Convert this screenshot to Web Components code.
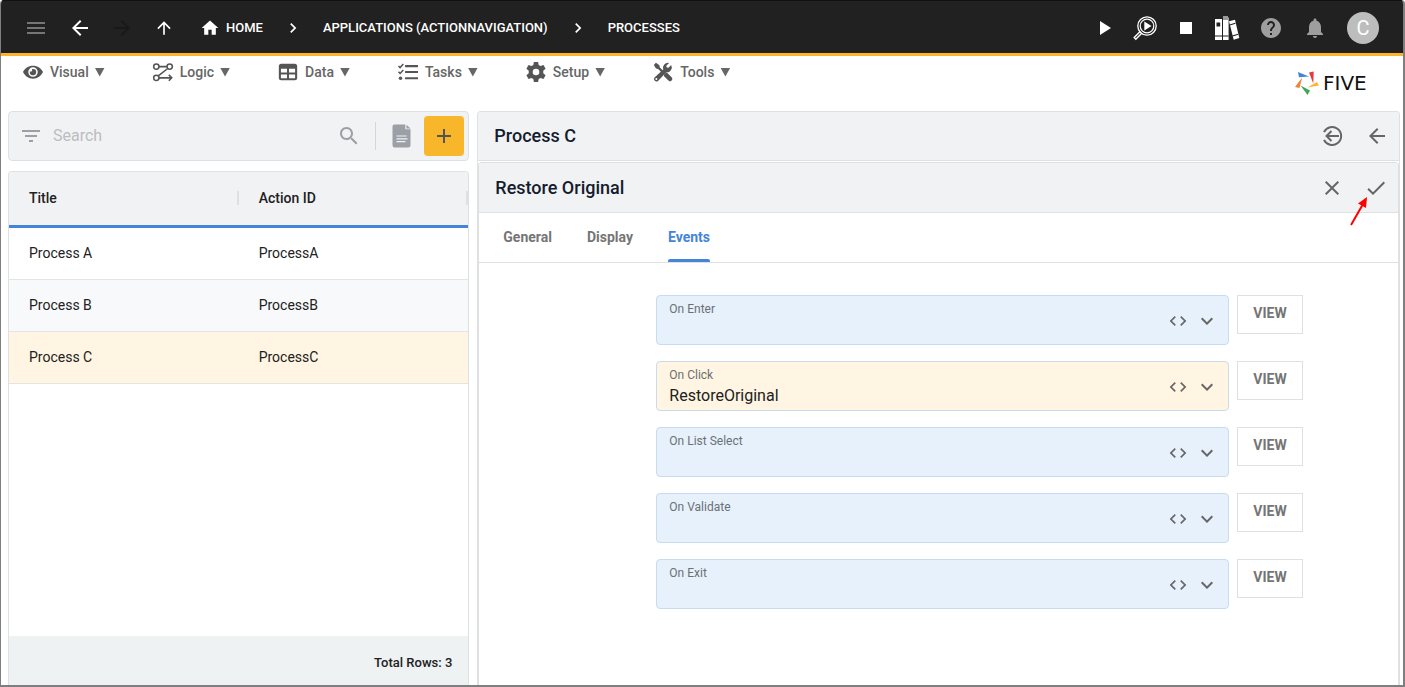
<!DOCTYPE html>
<html lang="en">
<head>
<meta charset="utf-8">
<meta name="viewport" content="width=device-width, initial-scale=1">
<title>Five - Processes</title>
<style>
  html, body { height: 100%; margin: 0; }
  body { font-family: Roboto, "Liberation Sans", sans-serif; font-size: 14px; color: #212121; background: #fff; }
</style>
</head>
<body>
<five-app></five-app>

<script>
const RESET = `
  *, *::before, *::after { box-sizing: border-box; }
  button { font: inherit; color: inherit; background: none; border: 0; padding: 0; margin: 0; cursor: pointer; display: flex; align-items: center; justify-content: center; }
  a { color: inherit; text-decoration: none; }
`;

function define(name, css, html, setup) {
  const template = document.createElement('template');
  template.innerHTML = `<style>${RESET}${css}</style>${typeof html === 'string' ? html : ''}`;
  customElements.define(name, class extends HTMLElement {
    connectedCallback() {
      if (this.shadowRoot) return;
      const root = this.attachShadow({ mode: 'open' });
      root.append(template.content.cloneNode(true));
      if (typeof html === 'function') root.innerHTML += html(this);
      if (setup) setup(this, root);
    }
  });
}

const ICONS = {
  menu: '<path d="M3 18h18v-2H3v2zm0-5h18v-2H3v2zm0-7v2h18V6H3z"/>',
  back: '<path d="M20 11H7.83l5.59-5.59L12 4l-8 8 8 8 1.41-1.41L7.83 13H20v-2z"/>',
  forward: '<path d="M12 4l-1.41 1.41L16.17 11H4v2h12.17l-5.58 5.59L12 20l8-8z"/>',
  up: '<path d="M4 12l1.41 1.41L11 7.83V20h2V7.83l5.58 5.59L20 12l-8-8-8 8z"/>',
  home: '<path d="M10 20v-6h4v6h5v-8h3L12 3 2 12h3v8z"/>',
  next: '<path d="M10 6L8.59 7.41 13.17 12l-4.58 4.59L10 18l6-6z"/>',
  play: '<path d="M8 5v14l11-7z"/>',
  stop: '<path d="M6 6h12v12H6z"/>',
  inspect: '<g fill="none" stroke="currentColor"><circle cx="14" cy="10" r="9.2" stroke-width="1.3"/><circle cx="14" cy="10" r="6.8" stroke-width="1.2"/><path d="M7.4 15.2L1.2 21.6l1.6 1.6L9 17" stroke-width="1.4"/></g><path d="M11.3 5.6v9l7.2-4.5z"/>',
  books: '<path d="M0 3h7v21H0zM8 1.500h5.600V24H8zM14 5.300l6-1.600L24.300 22l-5.600 1.800z"/><path fill="#999" d="M8 0h5v4H8z"/><g fill="#212121"><path d="M1.500 6.500h3.700v4H1.500zM0 19.500h7v1H0zM8 19.500h5.600v1H8zM7 3h.8v21H7z"/><path d="M14.500 8.500l5.800-1.700.3 1-5.800 1.700zM17.300 19.500l5.700-1.700.3 1-5.700 1.700z"/></g>',
  help: '<path d="M12 2C6.480 2 2 6.480 2 12s4.480 10 10 10 10-4.480 10-10S17.520 2 12 2zm1 17h-2v-2h2v2zm2.070-7.750l-.9.920C13.450 12.900 13 13.500 13 15h-2v-.5c0-1.100.450-2.100 1.170-2.830l1.240-1.260c.370-.360.590-.860.590-1.410 0-1.100-.9-2-2-2s-2 .9-2 2H8c0-2.210 1.790-4 4-4s4 1.790 4 4c0 .880-.360 1.680-.930 2.250z"/>',
  bell: '<path d="M12 22c1.100 0 2-.9 2-2h-4c0 1.100.890 2 2 2zm6-6v-5c0-3.070-1.640-5.640-4.500-6.320V4c0-.830-.670-1.500-1.500-1.500s-1.500.670-1.500 1.500v.680C7.630 5.360 6 7.920 6 11v5l-2 2v1h16v-1l-2-2z"/>',
  filter: '<path d="M10 18h4v-2h-4v2zM3 6v2h18V6H3zm3 7h12v-2H6v2z"/>',
  search: '<path d="M15.500 14h-.790l-.280-.270C15.410 12.590 16 11.110 16 9.500 16 5.910 13.090 3 9.500 3S3 5.910 3 9.500 5.910 16 9.500 16c1.610 0 3.090-.590 4.230-1.570l.270.280v.790l5 4.990L20.490 19l-4.990-5zm-6 0C7.010 14 5 11.990 5 9.500S7.010 5 9.500 5 14 7.010 14 9.500 11.990 14 9.500 14z"/>',
  add: '<path d="M19 13h-6v6h-2v-6H5v-2h6V5h2v6h6v2z"/>',
  note: '<path d="M4.500.5h10.800v4.800h5.200v16a2.200 2.200 0 0 1-2.200 2.200H4.700a2.200 2.200 0 0 1-2.200-2.200V2.500a2 2 0 0 1 2-2z"/><path d="M16.500.8l4 3.700h-4z"/><path stroke="#f1f2f4" stroke-width="1.200" d="M6.500 12h10M6.500 14.800h11M6.500 17.600h9"/>',
  close: '<path d="M19 6.410L17.590 5 12 10.590 6.410 5 5 6.410 10.590 12 5 17.590 6.410 19 12 13.410 17.590 19 19 17.590 13.410 12z"/>',
  check: '<path d="M9 16.170L4.830 12l-1.420 1.410L9 19 21 7l-1.410-1.410z"/>',
  down: '<path d="M16.590 8.590L12 13.170 7.410 8.590 6 10l6 6 6-6z"/>',
  code: '<path d="M9.400 16.600L4.800 12l4.600-4.600L8 6l-6 6 6 6 1.400-1.400zm5.200 0l4.600-4.600-4.600-4.600L16 6l6 6-6 6-1.400-1.400z"/>',
  exit: '<g fill="none" stroke="currentColor" stroke-width="2"><path d="M3 8.200a9 9 0 1 1 0 7.600"/><path d="M18 12H5.500M10.500 7l-5 5 5 5"/></g>',
  visual: '<path fill-rule="evenodd" d="M12 4.500C6.500 4.500 2 7.600 0 12c2 4.400 6.500 8 12 8s10-3.600 12-8c-2-4.400-6.500-7.500-12-7.500zm0 13.300a5.700 5.700 0 1 1 0-11.400 5.700 5.700 0 0 1 0 11.400z"/><path d="M12 8.300a3.800 3.800 0 1 1-3.700 3c1.700.8 3.300-.8 2.500-2.700.4-.2.800-.3 1.200-.3z"/>',
  logic: '<g fill="none" stroke="currentColor" stroke-width="1.900"><circle cx="4" cy="5.500" r="3.200"/><circle cx="20" cy="5.500" r="3.200"/><circle cx="4" cy="19" r="3.200"/><path d="M7.200 5.500h9.600M17.700 7.800L6.300 16.700M7.200 19H22.500M19 15.500l3.500 3.500-3.500 3.500"/></g>',
  data: '<path fill-rule="evenodd" d="M4 2h16a3 3 0 0 1 3 3v14a3 3 0 0 1-3 3H4a3 3 0 0 1-3-3V5a3 3 0 0 1 3-3zM3.500 8v4.500h7.300V8zM13.200 8v4.500h7.300V8zM3.500 15v4.500h7.300V15zM13.200 15v4.500h7.300V15z"/>',
  tasks: '<g fill="none" stroke="currentColor"><path stroke-width="2.600" d="M8.500 5H24M8.500 12H24M8.500 19.500H24"/><path stroke-width="1.800" d="M.6 4.800l1.900 1.900L6.400 2.500M.6 11.800l1.900 1.900 3.900-4.200"/></g><circle cx="3" cy="19.500" r="2.100"/>',
  setup: '<path fill-rule="evenodd" d="M9.500 0h5l.7 3.600 2.300 1.300 3.500-1.200 2.500 4.300-2.800 2.500v3l2.800 2.500-2.500 4.300-3.500-1.200-2.300 1.300-.7 3.600h-5l-.7-3.600-2.300-1.300L3 20.300.5 16l2.800-2.500v-3L.5 8 3 3.700l3.500 1.200 2.300-1.300zM12 8a4 4 0 1 0 0 8 4 4 0 0 0 0-8z"/>',
  tools: '<path d="M1 3.500L3.500 1l4.200 2.800.4 2.500 4.400 4.400-2 2L6.100 8.300l-2.500-.4zM13 15.300l2.300-2.400 1.800.3 5.300 5.200a2.700 2.700 0 0 1-3.900 3.900l-5.200-5.200z"/><path fill-rule="evenodd" d="M21.800 3.700l-3.300 3.300-2.100-.4-.4-2.100 3.300-3.300a6 6 0 0 0-7 7.800L1.800 18.500a3 3 0 0 0 4.200 4.200l9.700-10.200a6 6 0 0 0 6.100-8.800zM4 19.300a1.200 1.200 0 1 1 0 2.400 1.200 1.200 0 0 1 0-2.400z"/>'
};

define('five-icon',
  `:host { display: inline-flex; flex: none; } svg { display: block; fill: currentColor; overflow: visible; }`,
  el => {
    const size = el.getAttribute('size') || 24;
    return `<svg width="${size}" height="${size}" viewBox="0 0 24 24" aria-hidden="true">${ICONS[el.getAttribute('name')]}</svg>`;
  });

define('five-topbar', `
  :host { display: flex; justify-content: space-between; align-items: center; height: 56px; padding: 2px 24px 0 23px; background: #212121; color: #fff; border-top: 1px solid #111; border-bottom: 3px solid #fab52a; box-sizing: border-box; }
  nav, .actions, .run, ol { display: flex; align-items: center; }
  nav { gap: 18px; }
  nav button { width: 24px; height: 32px; }
  .menu { color: #757575; margin-right: 2px; }
  .off { color: #181818; }
  ol { list-style: none; margin: 0 0 0 4px; padding: 0; gap: 18px; font-size: 13px; font-weight: 500; line-height: 18px; }
  li, li a { display: flex; align-items: center; white-space: nowrap; }
  li { gap: 18px; }
  li a { gap: 4px; }
  .box { width: 24px; justify-content: center; }
  .run { gap: 17px; }
  .actions { gap: 20px; }
  .dim { color: #9e9e9e; }
  .avatar { width: 32px; height: 32px; border-radius: 50%; background: #bdbdbd; font-size: 20px; line-height: 24px; }
`, `
  <nav aria-label="Navigation">
    <button class="menu" aria-label="Menu"><five-icon name="menu"></five-icon></button>
    <button aria-label="Back"><five-icon name="back"></five-icon></button>
    <button class="off" aria-label="Forward" disabled><five-icon name="forward"></five-icon></button>
    <button aria-label="Up"><five-icon name="up" size="20"></five-icon></button>
    <ol>
      <li><a href="#home"><five-icon class="box" name="home" size="20"></five-icon>HOME</a></li>
      <li><five-icon class="box" name="next" size="20"></five-icon><a href="#applications">APPLICATIONS (ACTIONNAVIGATION)</a></li>
      <li><five-icon class="box" name="next" size="20"></five-icon><a href="#processes" aria-current="page">PROCESSES</a></li>
    </ol>
  </nav>
  <div class="actions">
    <div class="run">
      <button aria-label="Run"><five-icon name="play"></five-icon></button>
      <button aria-label="Inspect"><five-icon name="inspect"></five-icon></button>
      <button aria-label="Stop"><five-icon name="stop"></five-icon></button>
      <button aria-label="Documentation"><five-icon name="books"></five-icon></button>
    </div>
    <button class="dim" aria-label="Help"><five-icon name="help"></five-icon></button>
    <button class="dim" aria-label="Notifications"><five-icon name="bell"></five-icon></button>
    <button class="avatar" aria-label="Account">C</button>
  </div>
`);

define('five-menu-item', `
  :host { display: block; }
  button { gap: 7px; height: 32px; color: #666; font-weight: 500; font-size: 14px; line-height: 20px; white-space: nowrap; }
  five-icon { color: #555; }
  .caret { width: 10px; height: 9px; margin-left: -1px; background: #666; clip-path: polygon(0 0, 100% 0, 50% 100%); }
`, el => `<button aria-haspopup="menu"><five-icon name="${el.getAttribute('icon')}" size="20"></five-icon><slot></slot><span class="caret"></span></button>`);

define('five-brand', `
  :host { display: block; }
  a { display: flex; align-items: center; gap: 4px; width: 88px; color: #111; font-family: "DejaVu Sans", sans-serif; font-size: 20px; line-height: 24px; }
`, `
  <a href="#five"><svg width="24" height="24" viewBox="0 0 24 24" aria-hidden="true">
    <path fill="#4285d8" d="M3 1L14 5.500l-10 .7z"/>
    <path fill="#e5393f" d="M14 1.500L18.700.5 18.300 12.500z"/>
    <path fill="#fbb62c" d="M12.500 16.500L22 11l2 3.500z"/>
    <path fill="#3fa757" d="M5.500 14.500l9.500 5L12.500 24z"/>
    <path fill="#f58233" d="M7.200 6.500L4.500 17l-4.500-1z"/>
  </svg><span>FIVE</span></a>
`);

define('five-menubar', `
  :host { display: flex; justify-content: space-between; align-items: flex-start; padding: 0 20px 0 22px; height: 55px; }
  nav { display: flex; gap: 48px; }
  five-brand { margin-top: 15px; }
`, `
  <nav aria-label="Main menu">
    <five-menu-item icon="visual">Visual</five-menu-item>
    <five-menu-item icon="logic">Logic</five-menu-item>
    <five-menu-item icon="data">Data</five-menu-item>
    <five-menu-item icon="tasks">Tasks</five-menu-item>
    <five-menu-item icon="setup">Setup</five-menu-item>
    <five-menu-item icon="tools">Tools</five-menu-item>
  </nav>
  <five-brand></five-brand>
`);

define('five-search', `
  :host { display: flex; align-items: center; height: 50px; padding: 0 4px 0 10px; background: #f1f2f4; border: 1px solid #dfe0e2; border-radius: 4px; color: #9aa0a6; box-sizing: border-box; }
  input { flex: 1; min-width: 0; height: 40px; margin: 0 10px; padding: 0 0 2px; border: 0; outline: 0; background: none; font: inherit; font-size: 16px; color: #212121; }
  input::placeholder { color: #bdbdbd; opacity: 1; }
  .rule { width: 1px; height: 28px; background: #d5d6d8; margin: 0 14px; }
  .add { width: 40px; height: 40px; margin-left: 10px; border-radius: 4px; background: #f8b62b; color: #555; }
`, `
  <button aria-label="Filter"><five-icon name="filter"></five-icon></button>
  <input type="search" placeholder="Search" aria-label="Search">
  <button aria-label="Find"><five-icon name="search"></five-icon></button>
  <span class="rule"></span>
  <button aria-label="Notes"><five-icon name="note"></five-icon></button>
  <button class="add" aria-label="Add"><five-icon name="add" size="24"></five-icon></button>
`);

define('five-list', `
  :host { display: flex; flex-direction: column; border: 1px solid #dfe0e2; border-bottom: 0; border-radius: 4px 4px 0 0; overflow: hidden; }
  table { width: 100%; table-layout: fixed; border-collapse: separate; border-spacing: 0; font-size: 14px; line-height: 20px; }
  th, td { text-align: left; padding: 0 0 2px 20px; }
  th { height: 56px; background: #f1f2f4; border-bottom: 3px solid #4485d8; font-weight: 500; }
  th span { display: flex; justify-content: space-between; align-items: center; }
  th span::after { content: ""; width: 2px; height: 14px; background: #dfe0e2; }
  td { height: 52px; border-bottom: 1px solid #e3e4e6; }
  tbody tr:nth-child(even) { background: #f8f9fb; }
  tbody tr[aria-selected] { background: #fff5e2; }
  footer { margin-top: auto; height: 49px; padding: 4px 16px 0; display: flex; align-items: center; justify-content: flex-end; background: #eef2f3; font-size: 13px; font-weight: 500; line-height: 18px; }
`, `
  <table>
    <thead><tr><th scope="col"><span>Title</span></th><th scope="col"><span>Action ID</span></th></tr></thead>
    <tbody>
      <tr><td>Process A</td><td>ProcessA</td></tr>
      <tr><td>Process B</td><td>ProcessB</td></tr>
      <tr aria-selected="true"><td>Process C</td><td>ProcessC</td></tr>
    </tbody>
  </table>
  <footer>Total Rows: 3</footer>
`);

define('five-panel-header', `
  :host { display: flex; align-items: center; justify-content: space-between; height: 50px; padding: 0 10px 0 16px; background: #f1f2f4; border-bottom: 1px solid #dfe0e2; color: #141c2e; box-sizing: border-box; }
  h2 { margin: 0; font-size: 18px; line-height: 24px; font-weight: 500; }
  .tools { display: flex; gap: 20px; color: #666; }
`, `<h2><slot></slot></h2><div class="tools"><slot name="tools"></slot></div>`);

define('five-tool', `
  :host { display: block; position: relative; }
  .pointer { position: absolute; right: 20px; top: 20px; pointer-events: none; }
`, el => `
  <button aria-label="${el.getAttribute('label')}"><five-icon name="${el.getAttribute('icon')}"></five-icon></button>
  ${el.hasAttribute('pointer') ? '<svg class="pointer" width="20" height="30" viewBox="0 0 20 30" aria-hidden="true"><path d="M3 29L14.500 9" stroke="#f00" stroke-width="2"/><path fill="#f00" d="M19 1l-9 6.500 8 4.500z"/></svg>' : ''}
`);

define('five-tabs', `
  :host { display: flex; gap: 35px; height: 50px; padding: 0 24px; border-bottom: 1px solid #dfe0e2; color: #757575; font-size: 14px; line-height: 20px; font-weight: 700; box-sizing: border-box; }
  button { height: 49px; padding-bottom: 2px; position: relative; }
  [aria-selected="true"] { color: #4485d8; }
  [aria-selected="true"]::after { content: ""; position: absolute; left: 0; right: 0; bottom: 0; height: 3px; border-radius: 2px 2px 0 0; background: #4485d8; }
`, `
  <button role="tab" aria-selected="false">General</button>
  <button role="tab" aria-selected="false">Display</button>
  <button role="tab" aria-selected="true">Events</button>
`, el => el.setAttribute('role', 'tablist'));

define('five-event-field', `
  :host { display: flex; align-items: flex-start; gap: 8px; }
  .field { flex: 1; min-width: 0; height: 50px; padding-right: 9px; display: flex; align-items: center; gap: 4px; background: #e7f1fc; border: 1px solid #c9dcee; border-radius: 4px; color: #666; }
  .filled { background: #fff5e2; }
  .text { flex: 1; min-width: 0; height: 48px; padding: 5px 0 0 12px; }
  label { display: block; font-size: 12px; line-height: 16px; color: #6b7075; }
  select { display: block; width: 100%; height: 24px; padding: 0; margin: 0; border: 0; outline: 0; appearance: none; background: none; font: inherit; font-size: 16px; color: #212121; }
  .code { width: 26px; }
  .code, .chevron { margin-top: 2px; }
  .view { width: 66px; height: 39px; padding-bottom: 4px; border: 1px solid #dfe0e2; background: #fff; color: #757575; font-size: 14px; line-height: 20px; font-weight: 700; }
`, el => {
  const label = el.getAttribute('label');
  const value = el.getAttribute('value') || '';
  return `
    <div class="field ${value ? 'filled' : ''}">
      <div class="text"><label for="fn">${label}</label><select id="fn"><option>${value}</option></select></div>
      <button class="code" type="button" aria-label="Edit code for ${label}"><five-icon name="code" size="20"></five-icon></button>
      <five-icon class="chevron" name="down"></five-icon>
    </div>
    <button class="view" type="button">VIEW</button>`;
});

define('five-detail', `
  :host { display: flex; flex-direction: column; border: 1px solid #dfe0e2; border-bottom: 0; border-radius: 4px 4px 0 0; overflow: hidden; }
  .parent { height: 49px; }
  section { flex: 1; margin-top: 1px; border: 1px solid #dfe0e2; border-bottom: 0; border-radius: 4px 4px 0 0; overflow: hidden; }
  form { display: flex; flex-direction: column; gap: 16px; padding: 32px 95px 32px 177px; }
`, `
  <five-panel-header class="parent">Process C
    <five-tool slot="tools" icon="exit" label="Save and exit"></five-tool>
    <five-tool slot="tools" icon="back" label="Back"></five-tool>
  </five-panel-header>
  <section>
    <five-panel-header>Restore Original
      <five-tool slot="tools" icon="close" label="Cancel"></five-tool>
      <five-tool slot="tools" icon="check" label="Save" pointer></five-tool>
    </five-panel-header>
    <five-tabs></five-tabs>
    <form>
      <five-event-field label="On Enter"></five-event-field>
      <five-event-field label="On Click" value="RestoreOriginal"></five-event-field>
      <five-event-field label="On List Select"></five-event-field>
      <five-event-field label="On Validate"></five-event-field>
      <five-event-field label="On Exit"></five-event-field>
    </form>
  </section>
`);

define('five-app', `
  :host { display: flex; flex-direction: column; min-height: 100vh; border: solid #7f7f7f; border-width: 0 2px 2px 1px; border-radius: 4px 4px 0 0; overflow: hidden; box-sizing: border-box; }
  main { flex: 1; display: grid; grid-template-columns: minmax(0, 1fr) minmax(0, 2fr); gap: 8px; padding: 0 3px 0 7px; }
  aside { display: flex; flex-direction: column; gap: 10px; }
  five-list { flex: 1; }
`, `
  <five-topbar></five-topbar>
  <five-menubar></five-menubar>
  <main>
    <aside><five-search></five-search><five-list></five-list></aside>
    <five-detail></five-detail>
  </main>
`);
</script>
</body>
</html>
